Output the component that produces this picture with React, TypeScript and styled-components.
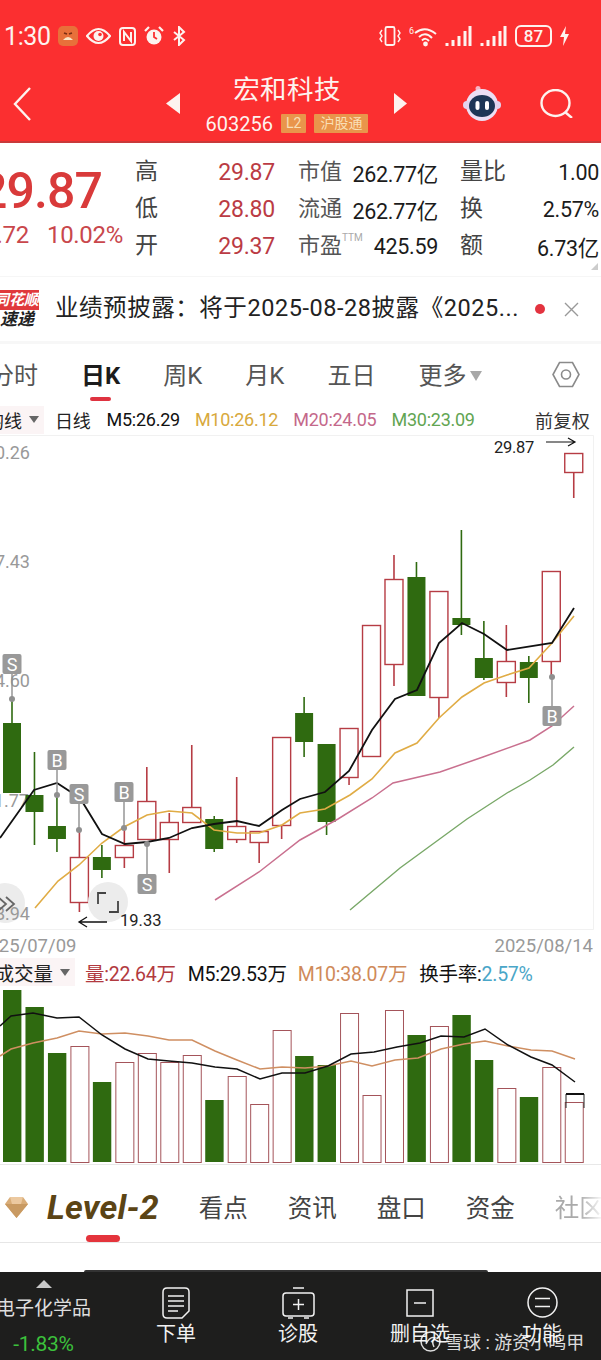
import React from "react"
import styled, { createGlobalStyle } from "styled-components"

const FONT = `Roboto, "Noto Sans CJK SC", sans-serif`

const GlobalStyle = createGlobalStyle`
  html, body { margin: 0; padding: 0; background: #fff; }
  body { font-family: ${FONT}; }
`

const Page = styled.div`
  position: relative;
  width: 601px;
  height: 1360px;
  overflow: hidden;
  display: flex;
  flex-direction: column;
  background: #fff;
`

/* ---------- red header ---------- */
const Header = styled.header`
  height: 143px;
  flex: none;
  background: #fb2f30;
  border-bottom: 2px solid #c9393a;
  box-sizing: border-box;
  color: #fdf3ef;
`

const StatusBar = styled.div`
  height: 72px;
  padding: 0 32px 0 4px;
  box-sizing: border-box;
  display: flex;
  justify-content: space-between;
  align-items: center;
`

const StatusGroup = styled.div`
  display: flex;
  align-items: center;
  gap: ${(p: { $gap: number }) => p.$gap}px;
`

const Clock = styled.span`
  font-size: 25px;
  width: 46px;
  letter-spacing: -0.4px;
`

const Battery = styled.span`
  width: 37px;
  height: 22px;
  box-sizing: border-box;
  border: 2px solid #fdf3ef;
  border-radius: 6px;
  display: flex;
  align-items: center;
  justify-content: center;
  font-size: 17px;
  font-weight: 500;
`

const NavBar = styled.div`
  height: 69px;
  box-sizing: border-box;
  padding: 0 0 6px 13px;
  display: flex;
  align-items: center;
`

const StockTitle = styled.div`
  width: 214px;
  display: flex;
  flex-direction: column;
  align-items: center;
  margin-top: -1px;
`

const StockName = styled.div`
  font-size: 26.5px;
  line-height: 34px;
  margin-bottom: 7px;
  letter-spacing: 0.4px;
`

const StockMeta = styled.div`
  display: flex;
  align-items: center;
  gap: 8px;
  font-size: 20px;
  line-height: 20px;
`

const Tag = styled.span<{ $pad: number }>`
  background: #e9954b;
  color: #f9dfb6;
  font-size: 14px;
  line-height: 19px;
  padding: 0 ${(p) => p.$pad}px;
  border-radius: 1px;
`

/* ---------- quote block ---------- */
const QuoteRow = styled.section`
  position: relative;
  height: 134px;
  flex: none;
  box-sizing: border-box;
  padding-top: 11px;
  display: flex;
  border-bottom: 1px solid #f6f6f6;
`

const PriceCol = styled.div`
  width: 135px;
  flex: none;
  padding-right: 12px;
  box-sizing: border-box;
  overflow: hidden;
  display: flex;
  flex-direction: column;
  align-items: flex-end;
  color: #d93a3a;
  white-space: nowrap;
`

const PriceMain = styled.div`
  font-size: 50px;
  font-weight: 500;
  line-height: 56px;
  margin: 9px 21px 0 0;
  letter-spacing: -0.9px;
`

const PriceChange = styled.div`
  font-size: 24px;
  line-height: 30px;
  margin-top: 1px;
  display: flex;
  gap: 18px;
  letter-spacing: -0.3px;
  color: #c9474c;
`

const StatGrid = styled.div`
  display: grid;
  grid-template-columns: 40px 100px 163px 72px 89px;
  grid-auto-rows: 37px;
  align-items: center;
  white-space: nowrap;
`

const StatLabel = styled.span<{ $indent?: number }>`
  font-size: 23px;
  color: #444;
  padding-left: ${(p) => p.$indent || 0}px;
  padding-bottom: 7px;
`

const RedValue = styled.span`
  font-size: 23px;
  color: #bb3b44;
  text-align: right;
  letter-spacing: -0.2px;
`

const CapCell = styled.span`
  display: flex;
  justify-content: space-between;
  align-items: center;
  padding-left: 23px;
`

const CapLabel = styled.span`
  font-size: 22px;
  color: #555;
  display: flex;
  align-items: flex-start;
  padding-bottom: 7px;
`

const CapUnit = styled.small`
  font-size: 10px;
  line-height: 22px;
  color: #aaa;
`

const BlackValue = styled.span`
  font-size: 21.5px;
  color: #1b1b1b;
  text-align: right;
  letter-spacing: -0.3px;
`

const CornerMark = styled.i`
  position: absolute;
  right: 3px;
  bottom: 6px;
  width: 0;
  height: 0;
  border-left: 7px solid transparent;
  border-bottom: 7px solid #ccc;
`

/* ---------- notice ---------- */
const NoticeRow = styled.section`
  height: 67px;
  flex: none;
  display: flex;
  align-items: center;
  box-sizing: border-box;
  border-bottom: 3px solid #f7f7f7;
`

const NoticeBadge = styled.div`
  width: 39px;
  flex: none;
  height: 39px;
  overflow: hidden;
  display: flex;
  flex-direction: column;
  align-items: flex-end;
  font-style: italic;
  font-weight: 700;
  white-space: nowrap;
`

const BadgeTop = styled.span`
  width: 100%;
  height: 20px;
  background: #e0393c;
  color: #fff;
  font-size: 15px;
  line-height: 20px;
  display: flex;
  justify-content: flex-end;
`

const BadgeBottom = styled.span`
  font-size: 17px;
  line-height: 19px;
  padding-right: 5px;
  color: #222;
`

const NoticeText = styled.div`
  margin-left: 16px;
  padding-bottom: 7px;
  width: 474px;
  font-size: 23.5px;
  color: #222;
  white-space: nowrap;
  overflow: hidden;
  letter-spacing: 0.55px;
`

const NoticeDot = styled.i`
  width: 10px;
  height: 10px;
  border-radius: 50%;
  background: #e3333f;
  margin-left: 6px;
`

const NoticeClose = styled.span`
  margin-left: 19px;
  display: flex;
`

/* ---------- period tabs ---------- */
const PeriodTabs = styled.nav`
  height: 60px;
  flex: none;
  box-sizing: border-box;
  padding-bottom: 2px;
  display: flex;
  align-items: center;
  gap: 43px;
  position: relative;
`

const PeriodTab = styled.span<{ $active?: boolean }>`
  position: relative;
  font-size: 24px;
  white-space: nowrap;
  color: ${(p) => (p.$active ? "#1c1c1c" : "#555")};
  font-weight: ${(p) => (p.$active ? 700 : 400)};
  &:first-child { margin-left: -10px; }
  &::after {
    content: "";
    display: ${(p) => (p.$active ? "block" : "none")};
    position: absolute;
    left: 9px;
    bottom: -10px;
    width: 21px;
    height: 4px;
    border-radius: 2px;
    background: #df3340;
  }
`

const MoreCaret = styled.i`
  display: inline-block;
  margin-left: 4px;
  vertical-align: 3px;
  border-left: 6px solid transparent;
  border-right: 6px solid transparent;
  border-top: 10px solid #a8a8a8;
`

const SettingsBtn = styled.span`
  position: absolute;
  left: 552px;
  top: 17px;
  display: flex;
`

/* ---------- legends ---------- */
const LegendRow = styled.div<{ $h: number; $size: number }>`
  height: ${(p) => p.$h}px;
  flex: none;
  display: flex;
  align-items: center;
  white-space: nowrap;
  font-size: ${(p) => p.$size}px;
  position: relative;
`

const Selector = styled.span<{ $width: number }>`
  height: 28px;
  width: ${(p) => p.$width}px;
  flex: none;
  background: #fbf4f5;
  display: flex;
  justify-content: flex-end;
  align-items: center;
  padding-right: 5px;
  box-sizing: border-box;
  overflow: hidden;
  color: #222;
`

const SelectorCaret = styled.i`
  margin-left: 7px;
  flex: none;
  border-left: 5px solid transparent;
  border-right: 5px solid transparent;
  border-top: 7px solid #666;
`

const LegendItem = styled.span<{ $color: string; $left: number }>`
  color: ${(p) => p.$color};
  margin-left: ${(p) => p.$left}px;
  letter-spacing: -0.25px;
`

const LegendRight = styled.span`
  margin-left: auto;
  padding-right: 11px;
  color: #333;
  letter-spacing: 0.3px;
`

const TurnoverValue = styled.span`
  color: #4aa6c8;
`

/* ---------- charts ---------- */
const ChartBox = styled.div<{ $h: number }>`
  height: ${(p) => p.$h}px;
  flex: none;
  display: flex;
`

const DateRow = styled.div`
  height: 28px;
  flex: none;
  box-sizing: border-box;
  padding: 3px 8px 0 0;
  display: flex;
  justify-content: space-between;
  align-items: center;
  font-size: 18.5px;
  color: #999;
  overflow: hidden;
  white-space: nowrap;
`

const StartDate = styled.span`
  margin-left: -22px;
`

/* ---------- content tabs ---------- */
const ContentTabs = styled.nav`
  height: 78px;
  flex: none;
  display: flex;
  align-items: center;
  gap: 40px;
  padding: 6px 0 0 5px;
  border-bottom: 1px solid #e6e6e6;
  box-sizing: border-box;
  overflow: hidden;
  white-space: nowrap;
`

const LevelTab = styled.span`
  position: relative;
  display: flex;
  align-items: center;
  gap: 19px;
  &::after {
    content: "";
    position: absolute;
    left: 81px;
    bottom: -15px;
    width: 34px;
    height: 7px;
    border-radius: 4px;
    background: #e4343c;
  }
`

const LevelText = styled.span`
  font-size: 34px;
  font-style: italic;
  font-weight: 700;
  color: #5b4415;
  letter-spacing: 0.2px;
`

const ContentTab = styled.span`
  font-size: 24.5px;
  color: #444;
`

const FadedTab = styled(ContentTab)`
  color: #aaa;
  -webkit-mask-image: linear-gradient(90deg, #000 50%, transparent 100%);
  mask-image: linear-gradient(90deg, #000 50%, transparent 100%);
`

const PeekArea = styled.div`
  flex: 1;
  display: flex;
  align-items: flex-end;
  justify-content: flex-start;
  padding-left: 84px;
`

const PeekCard = styled.div`
  width: 404px;
  height: 2px;
  background: #333;
  border-radius: 2px 2px 0 0;
`

/* ---------- bottom bar ---------- */
const BottomBar = styled.footer`
  position: relative;
  height: 88px;
  flex: none;
  background: #1e1e1d;
  display: flex;
  color: #f2f2f2;
`

const SectorCell = styled.div`
  width: 87px;
  margin-right: 28px;
  flex: none;
  display: flex;
  flex-direction: column;
  align-items: center;
  white-space: nowrap;
  padding-top: 8px;
  box-sizing: border-box;
`

const SectorCaret = styled.i`
  border-left: 8px solid transparent;
  border-right: 8px solid transparent;
  border-bottom: 8px solid #c8c8c8;
`

const SectorName = styled.span`
  font-size: 19px;
  line-height: 26px;
  margin-top: 8px;
  color: #ddd;
`

const SectorChange = styled.span`
  font-size: 21px;
  line-height: 26px;
  margin-top: 9px;
  color: #3cc13c;
  letter-spacing: -0.3px;
`

const BarAction = styled.div`
  width: 122px;
  flex: none;
  display: flex;
  flex-direction: column;
  align-items: center;
  padding-top: 14px;
  box-sizing: border-box;
`

const BarIcon = styled.span`
  height: 33px;
  display: flex;
  align-items: center;
`

const BarLabel = styled.span`
  font-size: 20px;
  line-height: 28px;
  margin-top: 1px;
`

const Watermark = styled.div`
  position: absolute;
  left: 420px;
  top: 56px;
  display: flex;
  align-items: center;
  gap: 4px;
  color: rgba(255, 255, 255, 0.86);
  font-size: 18px;
  white-space: pre;
`

/* ---------- data ---------- */
type Candle = [number, number, number, number, "r" | "g"]

// x is worked out from the index: [bodyTop, bodyBottom, high, low, colour]
const candles: Candle[] = [
  [723, 793, 699, 793, "g"],
  [795, 812, 752, 845, "g"],
  [826, 839, 795, 852, "g"],
  [857, 902, 830, 912, "r"],
  [857, 870, 845, 878, "g"],
  [845, 857, 828, 868, "r"],
  [801, 839, 767, 839, "r"],
  [822, 839, 813, 873, "r"],
  [807, 822, 745, 822, "r"],
  [819, 849, 816, 852, "g"],
  [826, 839, 777, 843, "r"],
  [831, 842, 831, 863, "r"],
  [737, 825, 737, 839, "r"],
  [713, 742, 697, 757, "g"],
  [744, 822, 744, 835, "g"],
  [728, 777, 728, 785, "r"],
  [625, 756, 625, 756, "r"],
  [579, 664, 555, 686, "r"],
  [577, 696, 562, 696, "g"],
  [591, 697, 591, 718, "r"],
  [618, 625, 530, 635, "g"],
  [658, 678, 621, 680, "g"],
  [661, 682, 625, 697, "r"],
  [662, 678, 656, 703, "g"],
  [571, 661, 571, 677, "r"],
  [453, 472, 453, 498, "r"],
]

const ma5 = "0,838 34,790 57,783 80,798 102,834 125,844 147,842 169,838 192,828 214,824 237,821 259,826 282,810 300,799 325,792 349,771 372,730 395,699 417,690 439,643 462,623 484,634 507,650 552,643 574,608"
const ma10 = "35,908 58,881 79,865 102,843 124,827 147,815 169,811 192,813 214,830 237,833 259,833 282,825 300,813 325,809 350,795 372,779 395,753 417,743 439,718 462,697 484,683 507,675 529,668 552,643 574,616"
const ma20 = "215,900 259,872 300,840 338,819 372,798 393,783 440,772 483,757 530,740 552,726 574,706"
const ma30 = "350,910 400,868 467,819 507,793 530,780 553,765 574,747"

const signals: [string, number, number, number][] = [
  ["S", 12, 664, 699],
  ["B", 57, 760, 795],
  ["S", 79, 794, 830],
  ["B", 124, 792, 828],
  ["S", 147, 884, 844],
  ["B", 552, 716, 677],
]

const axisLabels: [string, number, number][] = [
  ["0.26", 30, 459],
  ["7.43", 30, 568],
  ["4.60", 30, 687],
  ["1.77", 29, 807],
]

const volumes: [number, "r" | "g"][] = [
  [990, "g"], [1007, "g"], [1053, "g"], [1046, "r"], [1082, "g"], [1062, "r"], [1053, "r"], [1062, "r"], [1055, "r"],
  [1100, "g"], [1076, "r"], [1104, "r"], [1030, "r"], [1056, "g"], [1065, "g"], [1013, "r"], [1095, "r"], [1010, "r"],
  [1035, "g"], [1026, "r"], [1015, "g"], [1060, "g"], [1088, "r"], [1097, "g"], [1067, "r"], [1102, "r"],
]

const volM5 = "0,1026 11,1016 33,1013 57,1018 79,1017 102,1035 125,1049 148,1059 169,1061 192,1063 215,1067 237,1069 260,1079 282,1073 305,1073 328,1066 351,1054 374,1052 397,1047 420,1043 441,1036 464,1037 485,1029 508,1045 531,1057 552,1065 575,1082"
const volM10 = "0,1056 11,1049 33,1043 57,1038 79,1031 102,1034 125,1033 148,1036 169,1040 192,1040 215,1051 237,1060 260,1069 282,1067 305,1068 328,1066 351,1061 372,1066 395,1060 418,1058 441,1049 464,1044 485,1041 508,1046 531,1050 552,1051 575,1059"

const RED = "#b63c44"
const GREEN = "#2f6a10"
const candleX = (i: number) => 12 + i * 22.47

/* ---------- charts as drawings ---------- */
const KChart = () => (
  <svg width="601" height="495" viewBox="0 435 601 495" fontFamily={FONT}>
    <path d="M0 435.5H593.5V929.5H0" fill="none" stroke="#f1f1f1" />
    {axisLabels.map(([t, x, y]) => (
      <text key={t} x={x} y={y} fontSize="18" fill="#999" textAnchor="end">{t}</text>
    ))}
    {candles.map(([top, bottom, high, low, c], i) => {
      const x = candleX(i)
      const color = c === "r" ? RED : GREEN
      return (
        <g key={i}>
          <line x1={x} x2={x} y1={high} y2={low} stroke={color} strokeWidth="1.6" />
          <rect
            x={x - 9} y={c === "r" ? top + 0.5 : top} width="18" height={bottom - top}
            fill={c === "r" ? "#fff" : GREEN} stroke={c === "r" ? RED : "none"} strokeWidth="1.4"
          />
        </g>
      )
    })}
    <polyline points={ma30} fill="none" stroke="#79a868" strokeWidth="1.4" />
    <polyline points={ma20} fill="none" stroke="#c9708f" strokeWidth="1.5" />
    <polyline points={ma10} fill="none" stroke="#e0ac45" strokeWidth="1.6" />
    <polyline points={ma5} fill="none" stroke="#111" strokeWidth="1.8" />
    {signals.map(([t, x, y, dot]) => (
      <g key={`${t}${x}`}>
        <line x1={x} x2={x} y1={y} y2={dot} stroke="#8f8f8f" strokeWidth="1.4" />
        <circle cx={x} cy={dot} r="3" fill="#8f8f8f" />
        <rect x={x - 9.5} y={y - 10} width="19" height="20" rx="2" fill="#999" />
        <text x={x} y={y + 6.5} fontSize="18" fill="#fff" textAnchor="middle">{t}</text>
      </g>
    ))}
    <text x="494" y="453" fontSize="16.5" fill="#222" letterSpacing="-0.3">29.87</text>
    <path d="M546 442H574M568 438L575 442L568 446" fill="none" stroke="#111" strokeWidth="1.2" />
    <circle cx="5" cy="903" r="20" fill="#ececec" />
    <text x="30" y="920" fontSize="18" fill="#999" textAnchor="end">8.94</text>
    <path d="M-2 897L6 904L-2 911M6 897L14 904L6 911" fill="none" stroke="#666" strokeWidth="1.8" />
    <circle cx="108" cy="902" r="20" fill="#ececec" />
    <path d="M98 904V893H106M118 901V912H109" fill="none" stroke="#444" strokeWidth="1.8" />
    <path d="M107 922H80M87 917L79 922L87 927" fill="none" stroke="#111" strokeWidth="1.3" />
    <text x="120" y="926" fontSize="16.5" fill="#222">19.33</text>
  </svg>
)

const VolumeChart = () => (
  <svg width="601" height="179" viewBox="0 986 601 179">
    {volumes.map(([top, c], i) => {
      const x = 3 + i * 22.47
      return c === "g" ? (
        <rect key={i} x={x} y={top} width="18.4" height={1162 - top} fill={GREEN} />
      ) : (
        <rect key={i} x={x + 0.5} y={top + 0.5} width="18" height={1162 - top} fill="#fff" stroke="#a4545a" strokeWidth="1" />
      )
    })}
    <path d="M566 1108V1094H584V1108" fill="none" stroke="#222" strokeWidth="1" />
    <path d="M566 1094H584" stroke="#111" strokeWidth="2" />
    <polyline points={volM10} fill="none" stroke="#cf8f62" strokeWidth="1.5" />
    <polyline points={volM5} fill="none" stroke="#111" strokeWidth="1.5" />
    <path d="M0 1164.5H601" stroke="#e8e8e8" />
  </svg>
)

/* ---------- icons ---------- */
const Line = { fill: "none", stroke: "#fdf3ef" }

const SadAppIcon = () => (
  <svg width="20" height="20" viewBox="0 0 20 20">
    <rect width="20" height="20" rx="5" fill="#e8703a" />
    <path d="M5 14Q10 8 15 14Z" fill="#fbe6c8" />
    <path d="M6 7L9 8M14 7L11 8" stroke="#7a2d12" strokeWidth="1.6" />
  </svg>
)

const EyeIcon = () => (
  <svg width="25" height="18" viewBox="0 0 25 18">
    <path d="M1 9Q12.500 -5 24 9Q12.500 23 1 9Z" {...Line} strokeWidth="2.200" />
    <circle cx="12.500" cy="9" r="5" fill="#fdf3ef" />
    <circle cx="14" cy="7.500" r="1.800" fill="#fb2f30" />
  </svg>
)

const NfcIcon = () => (
  <svg width="17" height="19" viewBox="0 0 17 19">
    <rect x="1" y="1" width="15" height="17" rx="3" {...Line} strokeWidth="2" />
    <path d="M5 14V5L12 14V5" {...Line} strokeWidth="2" />
  </svg>
)

const AlarmIcon = () => (
  <svg width="20" height="20" viewBox="0 0 20 20">
    <circle cx="10" cy="11" r="7.500" fill="#fdf3ef" />
    <path d="M10 6V11L13 13" fill="none" stroke="#fb2f30" strokeWidth="1.800" />
    <path d="M1 5L5 1M19 5L15 1" {...Line} strokeWidth="2.200" />
  </svg>
)

const BluetoothIcon = () => (
  <svg width="14" height="20" viewBox="0 0 14 20">
    <path d="M2 6L12 14L7 19V1L12 6L2 14" {...Line} strokeWidth="2" />
  </svg>
)

const VibrateIcon = () => (
  <svg width="22" height="22" viewBox="0 0 22 22">
    <rect x="6.500" y="2" width="9" height="18" rx="1.500" {...Line} strokeWidth="1.800" />
    <path d="M3 5L1 8L3 11L1 14L3 17M19 5L21 8L19 11L21 14L19 17" {...Line} strokeWidth="1.400" />
  </svg>
)

const WifiIcon = () => (
  <svg width="28" height="22" viewBox="0 0 28 22" fontFamily={FONT}>
    <text x="0" y="9" fontSize="9" fill="#fdf3ef">6</text>
    <path d="M6 8Q16 0 27 9M10 12Q16.500 6 23 13M13 15.500Q16.500 12 20 16" {...Line} strokeWidth="2" />
    <circle cx="16.500" cy="19" r="2.400" fill="#fdf3ef" />
  </svg>
)

const SignalIcon = () => (
  <svg width="27" height="22" viewBox="0 0 27 22">
    <path d="M2 21V18M8 21V15M14 21V11M20 21V6M25 21V1" fill="none" stroke="#fdf3ef" strokeWidth="3" />
  </svg>
)

const BoltIcon = () => (
  <svg width="9" height="20" viewBox="0 0 9 20">
    <path d="M6 0L0 11H4L3 20L9 8H5Z" fill="#fdf3ef" />
  </svg>
)

const BackIcon = () => (
  <svg width="18" height="34" viewBox="0 0 18 34">
    <path d="M17 1L2 17L17 33" {...Line} strokeWidth="2.400" />
  </svg>
)

const Arrow = ({ dir, left }: { dir: "l" | "r"; left: number }) => (
  <svg width="14" height="21" viewBox="0 0 14 21" style={{ marginLeft: left }}>
    <path d={dir === "l" ? "M14 0V21L0 10.500Z" : "M0 0V21L13 10.500Z"} fill="#fdf3ef" />
  </svg>
)

const RobotIcon = () => (
  <svg width="40" height="35" viewBox="0 0 40 35" style={{ marginLeft: 54 }}>
    <circle cx="16" cy="2.500" r="2.500" fill="#f6b4c4" />
    <circle cx="20" cy="19" r="16" fill="#ecdff4" />
    <rect x="1" y="15" width="38" height="8" rx="4" fill="#e3d4ef" />
    <ellipse cx="20" cy="20" rx="13" ry="11" fill="#1e3656" />
    <rect x="13.500" y="15" width="4" height="9" rx="2" fill="#fff" />
    <rect x="23" y="15" width="4" height="9" rx="2" fill="#fff" />
  </svg>
)

const SearchIcon = () => (
  <svg width="33" height="29" viewBox="0 0 33 29" style={{ marginLeft: 38 }}>
    <ellipse cx="15.500" cy="14" rx="14" ry="13" {...Line} strokeWidth="2.400" />
    <path d="M25 23L32 29" {...Line} strokeWidth="2.400" />
  </svg>
)

const HexIcon = () => (
  <svg width="28" height="27" viewBox="0 0 28 27">
    <path d="M7.500 1.500H20.500L27 13.500L20.500 25.500H7.500L1 13.500Z" fill="none" stroke="#8a8a8a" strokeWidth="1.600" />
    <circle cx="14" cy="13.500" r="4.500" fill="none" stroke="#8a8a8a" strokeWidth="1.600" />
  </svg>
)

const CloseIcon = () => (
  <svg width="15" height="15" viewBox="0 0 15 15">
    <path d="M1 1L14 14M14 1L1 14" stroke="#999" strokeWidth="1.400" />
  </svg>
)

const GemIcon = () => (
  <svg width="23" height="22" viewBox="0 0 23 22">
    <path d="M5 1H18L23 8L11.500 22L0 8Z" fill="#d9ad78" />
    <path d="M0 8H23L11.500 22Z" fill="#c99a62" />
    <path d="M5 1H18L16 8H7Z" fill="#ecc9a0" />
  </svg>
)

const Stroke = { fill: "none", stroke: "#f2f2f2", strokeWidth: 1.500 }

const OrderIcon = () => (
  <svg width="28" height="32" viewBox="0 0 28 32">
    <path d="M5 1H23Q27 1 27 5V24L20 31H5Q1 31 1 27V5Q1 1 5 1Z" {...Stroke} />
    <path d="M6 9H22M6 14H22M6 19H22M6 24H16" {...Stroke} />
  </svg>
)

const DiagnoseIcon = () => (
  <svg width="33" height="32" viewBox="0 0 33 32">
    <path d="M11 1H22M4 6H29Q32 6 32 9V26Q32 29 29 29H4Q1 29 1 26V9Q1 6 4 6Z" {...Stroke} />
    <path d="M16.500 12V23M11 17.500H22M6 31H11M22 31H27" {...Stroke} />
  </svg>
)

const RemoveIcon = () => (
  <svg width="28" height="28" viewBox="0 0 28 28">
    <rect x="1" y="1" width="26" height="26" {...Stroke} />
    <path d="M8 14H20" {...Stroke} />
  </svg>
)

const MenuIcon = () => (
  <svg width="31" height="31" viewBox="0 0 31 31">
    <circle cx="15.500" cy="15.500" r="14.500" {...Stroke} />
    <path d="M8 11.500H23M8 19.500H23" {...Stroke} />
  </svg>
)

const SnowballIcon = () => (
  <svg width="21" height="21" viewBox="0 0 21 21">
    <circle cx="10.500" cy="10.500" r="9.500" fill="none" stroke="rgba(255,255,255,0.85)" strokeWidth="1.500" />
    <path d="M6 13Q10 5 15 7Q11 10 14 16" fill="none" stroke="rgba(255,255,255,0.85)" strokeWidth="1.500" />
  </svg>
)

export default function App() {
  return (
    <Page>
      <GlobalStyle />
      <Header>
        <StatusBar>
          <StatusGroup $gap={8}>
            <Clock>1:30</Clock>
            <SadAppIcon />
            <EyeIcon />
            <NfcIcon />
            <AlarmIcon />
            <BluetoothIcon />
          </StatusGroup>
          <StatusGroup $gap={8}>
            <VibrateIcon />
            <WifiIcon />
            <SignalIcon />
            <SignalIcon />
            <Battery>87</Battery>
            <BoltIcon />
          </StatusGroup>
        </StatusBar>
        <NavBar>
          <BackIcon />
          <Arrow dir="l" left={135} />
          <StockTitle>
            <StockName>宏和科技</StockName>
            <StockMeta>
              603256
              <Tag $pad={5}>L2</Tag>
              <Tag $pad={6}>沪股通</Tag>
            </StockMeta>
          </StockTitle>
          <Arrow dir="r" left={0} />
          <RobotIcon />
          <SearchIcon />
        </NavBar>
      </Header>

      <QuoteRow>
        <PriceCol>
          <PriceMain>29.87</PriceMain>
          <PriceChange>
            <span>2.72</span>
            <span>10.02%</span>
          </PriceChange>
        </PriceCol>
        <StatGrid>
          <StatLabel>高</StatLabel>
          <RedValue>29.87</RedValue>
          <CapCell><CapLabel>市值</CapLabel><BlackValue>262.77亿</BlackValue></CapCell>
          <StatLabel $indent={22}>量比</StatLabel>
          <BlackValue>1.00</BlackValue>

          <StatLabel>低</StatLabel>
          <RedValue>28.80</RedValue>
          <CapCell><CapLabel>流通</CapLabel><BlackValue>262.77亿</BlackValue></CapCell>
          <StatLabel $indent={22}>换</StatLabel>
          <BlackValue>2.57%</BlackValue>

          <StatLabel>开</StatLabel>
          <RedValue>29.37</RedValue>
          <CapCell><CapLabel>市盈<CapUnit>TTM</CapUnit></CapLabel><BlackValue>425.59</BlackValue></CapCell>
          <StatLabel $indent={22}>额</StatLabel>
          <BlackValue>6.73亿</BlackValue>
        </StatGrid>
        <CornerMark />
      </QuoteRow>

      <NoticeRow>
        <NoticeBadge>
          <BadgeTop>同花顺</BadgeTop>
          <BadgeBottom>速递</BadgeBottom>
        </NoticeBadge>
        <NoticeText>业绩预披露：将于2025-08-28披露《2025...</NoticeText>
        <NoticeDot />
        <NoticeClose><CloseIcon /></NoticeClose>
      </NoticeRow>

      <PeriodTabs>
        <PeriodTab>分时</PeriodTab>
        <PeriodTab $active>日K</PeriodTab>
        <PeriodTab>周K</PeriodTab>
        <PeriodTab>月K</PeriodTab>
        <PeriodTab>五日</PeriodTab>
        <PeriodTab>更多<MoreCaret /></PeriodTab>
        <SettingsBtn><HexIcon /></SettingsBtn>
      </PeriodTabs>

      <LegendRow $h={31} $size={18}>
        <Selector $width={44}>均线<SelectorCaret /></Selector>
        <LegendItem $color="#222" $left={11}>日线</LegendItem>
        <LegendItem $color="#111" $left={16}>M5:26.29</LegendItem>
        <LegendItem $color="#d8a93c" $left={15}>M10:26.12</LegendItem>
        <LegendItem $color="#c4688a" $left={15}>M20:24.05</LegendItem>
        <LegendItem $color="#62a552" $left={15}>M30:23.09</LegendItem>
        <LegendRight>前复权</LegendRight>
      </LegendRow>

      <ChartBox $h={495}><KChart /></ChartBox>

      <DateRow>
        <StartDate>2025/07/09</StartDate>
        <span>2025/08/14</span>
      </DateRow>

      <LegendRow $h={28} $size={19.5}>
        <Selector $width={75}>成交量<SelectorCaret /></Selector>
        <LegendItem $color="#b23a40" $left={10}>量:22.64万</LegendItem>
        <LegendItem $color="#111" $left={12}>M5:29.53万</LegendItem>
        <LegendItem $color="#cf8a5a" $left={11}>M10:38.07万</LegendItem>
        <LegendItem $color="#111" $left={12}>换手率:<TurnoverValue>2.57%</TurnoverValue></LegendItem>
      </LegendRow>

      <ChartBox $h={179}><VolumeChart /></ChartBox>

      <ContentTabs>
        <LevelTab>
          <GemIcon />
          <LevelText>Level-2</LevelText>
        </LevelTab>
        <ContentTab>看点</ContentTab>
        <ContentTab>资讯</ContentTab>
        <ContentTab>盘口</ContentTab>
        <ContentTab>资金</ContentTab>
        <FadedTab>社区</FadedTab>
      </ContentTabs>

      <PeekArea><PeekCard /></PeekArea>

      <BottomBar>
        <SectorCell>
          <SectorCaret />
          <SectorName>电子化学品</SectorName>
          <SectorChange>-1.83%</SectorChange>
        </SectorCell>
        <BarAction><BarIcon><OrderIcon /></BarIcon><BarLabel>下单</BarLabel></BarAction>
        <BarAction><BarIcon><DiagnoseIcon /></BarIcon><BarLabel>诊股</BarLabel></BarAction>
        <BarAction><BarIcon><RemoveIcon /></BarIcon><BarLabel>删自选</BarLabel></BarAction>
        <BarAction><BarIcon><MenuIcon /></BarIcon><BarLabel>功能</BarLabel></BarAction>
        <Watermark><SnowballIcon />雪球 : 游资小鸣甲</Watermark>
      </BottomBar>
    </Page>
  )
}
